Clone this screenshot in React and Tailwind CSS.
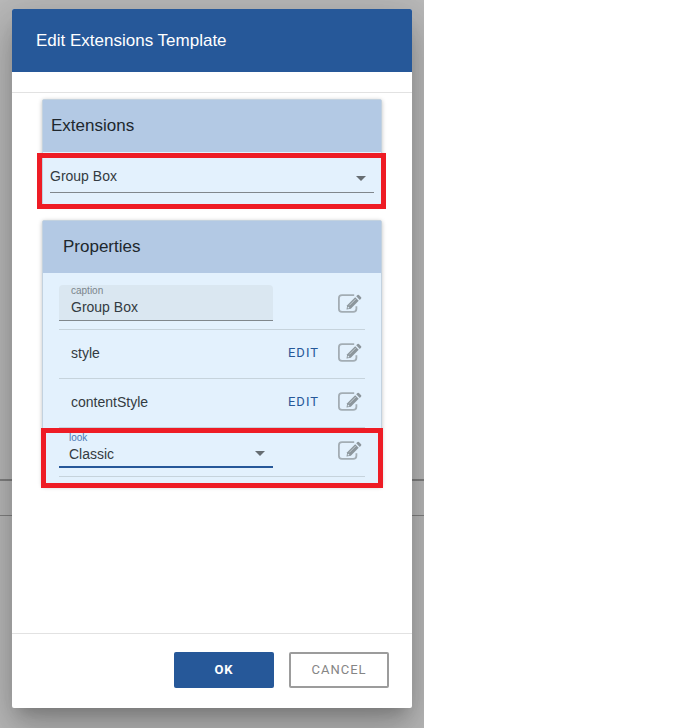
import { useState } from 'react';

const EditIcon = () => (
  <svg width="26" height="22" viewBox="0 0 26 22" fill="none" aria-hidden="true">
    <path d="M17.200 2.100H5A3.200 3.200 0 0 0 1.900 5.300v10.400A3.200 3.200 0 0 0 5 18.900h11.200a3.200 3.200 0 0 0 3.200-3.200V13.200" stroke="#a3adb4" strokeWidth="1.800" />
    <path d="M9.500 16.500l.7-4.300 8-7.900 3.500 3.500-7.900 7.900z" fill="#8c969c" />
    <path d="M19.200 3.300l1.300-1.300q.7-.6 1.400 0l2.200 2.200q.6.700 0 1.400l-1.300 1.300z" fill="#8c969c" />
    <path d="M12.300 12.400l6.400-6.400" stroke="#c3cdd4" strokeWidth="1" />
    <path d="M11 13.400l1.600 1.600-1.700.4-.3-.3z" fill="#e3f1fd" />
  </svg>
);

const Arrow = ({ className }) => (
  <svg width="10" height="5" viewBox="0 0 10 5" className={className} aria-hidden="true">
    <path d="M0 0h10L5 5z" fill="#666d72" />
  </svg>
);

const IconButton = ({ label }) => (
  <button type="button" aria-label={label} className="shrink-0 cursor-pointer">
    <EditIcon />
  </button>
);

const Highlight = ({ className }) => (
  <div className={`pointer-events-none absolute border-5 border-[#ee1c25] ${className}`} />
);

const Card = ({ title, titleClass, children }) => (
  <section className="rounded-xs border border-[#c3d2df] bg-[#e3f1fd] shadow-[0_1px_4px_rgba(0,0,0,0.25)]">
    <h2 className={`flex h-[52px] items-center bg-[#b3c9e4] text-[17px] text-[#20272d] ${titleClass}`}>{title}</h2>
    {children}
  </section>
);

const EditRow = ({ name }) => (
  <div className="flex h-[49px] items-center border-b border-[#c6d3dc] pr-[2px] pb-[2px] pl-3">
    <span className="flex-1 text-sm">{name}</span>
    <button type="button" className="mr-[18px] cursor-pointer font-[Roboto,sans-serif] text-[13px] tracking-[1px] text-[#265899]">
      EDIT
    </button>
    <IconButton label={`Edit ${name}`} />
  </div>
);

const App = () => {
  const [extension, setExtension] = useState('Group Box');
  const [caption, setCaption] = useState('Group Box');
  const [look, setLook] = useState('Classic');

  return (
    <div className="min-h-screen bg-white font-['Liberation_Sans',Arial,sans-serif] text-[#333b41]">
      <div className="relative flex min-h-screen w-full max-w-[424px] flex-col overflow-hidden bg-[#bababa] px-3 pt-[9px] pb-5">
        {/* Page behind the dialog */}
        <div className="absolute inset-x-0 top-[479px] h-[37px] border-t-2 border-b border-[#828282]" />

        {/* Dialog */}
        <div
          role="dialog"
          aria-labelledby="dialog-title"
          className="relative flex flex-1 flex-col rounded-xs bg-white shadow-[0_11px_15px_-7px_rgba(0,0,0,0.2),0_24px_38px_3px_rgba(0,0,0,0.14),0_9px_46px_8px_rgba(0,0,0,0.12)]"
        >
          <h1 id="dialog-title" className="flex h-[63px] items-center rounded-t-xs bg-[#265899] px-6 text-[17px] text-white">
            Edit Extensions Template
          </h1>

          <div className="mt-5 flex-1 space-y-[15px] border-y border-[#e2e2e2] px-[30px] pt-[6px]">
            <Card title="Extensions" titleClass="pl-2">
              <div className="relative h-[52px] border-t border-[#e3f1fd] px-[7px] pt-2">
                <select
                  aria-label="Extension"
                  value={extension}
                  onChange={(e) => setExtension(e.target.value)}
                  className="h-8 w-full appearance-none border-b border-[#80878c] pb-[2px] text-sm outline-none"
                >
                  <option>Group Box</option>
                </select>
                <Arrow className="pointer-events-none absolute top-[23px] right-[15px]" />
                <Highlight className="top-0 -right-[5px] -left-[6px] h-14" />
              </div>
            </Card>

            <Card title="Properties" titleClass="pl-5">
              <div className="px-4 pt-2 pb-2">
                <div className="flex h-[49px] items-center justify-between border-b border-[#c6d3dc] pr-[2px] pb-[2px]">
                  <div className="mb-[2px] flex h-9 w-[214px] flex-col rounded-t border-b border-[#80878c] bg-[#dae7f1] px-3">
                    <label htmlFor="caption" className="h-3 text-[10px] leading-3 text-[#7b858c]">caption</label>
                    <input
                      id="caption"
                      value={caption}
                      onChange={(e) => setCaption(e.target.value)}
                      className="h-5 w-full text-sm outline-none"
                    />
                  </div>
                  <IconButton label="Edit caption" />
                </div>

                <EditRow name="style" />
                <EditRow name="contentStyle" />

                <div className="relative flex h-[49px] items-center justify-between border-b border-[#c6d3dc] pr-[2px] pb-[2px]">
                  <div className="relative mb-[2px] flex h-9 w-[214px] flex-col border-b-2 border-[#265899] px-[10px]">
                    <label htmlFor="look" className="h-3 text-[10px] leading-3 text-[#4a78b5]">look</label>
                    <select
                      id="look"
                      value={look}
                      onChange={(e) => setLook(e.target.value)}
                      className="h-5 w-full appearance-none text-sm outline-none"
                    >
                      <option>Classic</option>
                    </select>
                    <Arrow className="pointer-events-none absolute top-[19px] right-2" />
                  </div>
                  <IconButton label="Edit look" />
                  <Highlight className="top-0 -right-[18px] -left-[18px] h-15" />
                </div>
              </div>
            </Card>
          </div>

          <div className="flex h-[74px] items-center justify-end gap-[15px] pr-[23px] pb-[2px] font-[Roboto,sans-serif] text-[13px] tracking-[1px]">
            <button type="button" className="h-9 w-[100px] cursor-pointer rounded-xs bg-[#265899] font-bold text-white">
              OK
            </button>
            <button type="button" className="h-9 w-[100px] cursor-pointer rounded-xs border-2 border-[#9c9c9c] text-[#858585]">
              CANCEL
            </button>
          </div>
        </div>
      </div>
    </div>
  );
};

export default App;
